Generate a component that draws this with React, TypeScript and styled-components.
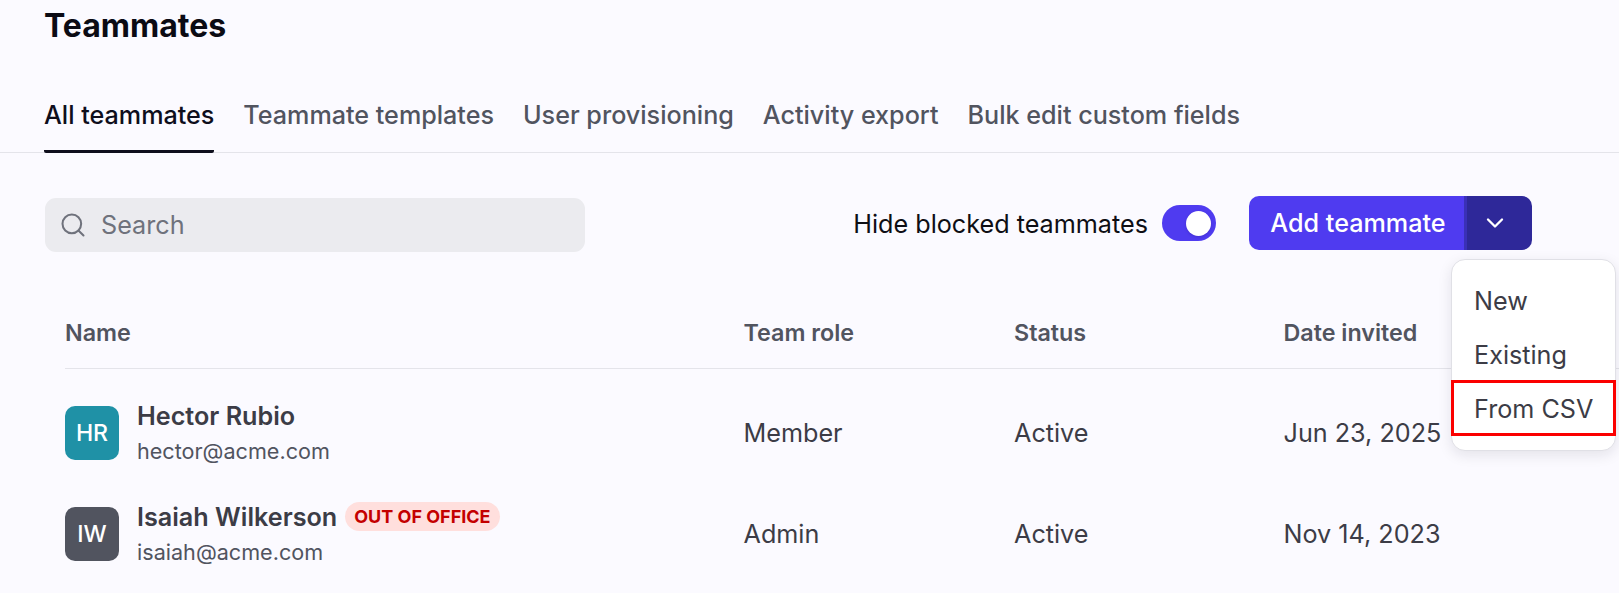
import React from "react";
import styled, { createGlobalStyle } from "styled-components";
import { Search, ChevronDown } from "lucide-react";

const Global = createGlobalStyle`
  html, body { margin: 0; padding: 0; background: #fbfaff; height: 593px; overflow: hidden; }
  * { box-sizing: border-box; }
  body { font-family: Inter, "Liberation Sans", sans-serif; }
`;
const Page = styled.div`
  width: 1619px;
  height: 593px;
  overflow: hidden;
  background: #fbfaff;
`;
const Title = styled.h1`
  margin: 0;
  padding: 7px 0 0 44px;
  height: 90px;
  font-size: 32px;
  line-height: 38px;
  font-weight: 700;
  color: #0b0b14;
`;
const Tabs = styled.nav`
  display: flex;
  gap: 29px;
  height: 63px;
  padding-left: 44px;
  border-bottom: 1px solid #e4e4ea;
`;
const Tab = styled.div<{ $active?: boolean }>`
  height: 63px;
  padding-top: 7px;
  font-size: 25.15px;
  line-height: 36px;
  font-weight: 500;
  color: ${(p) => (p.$active ? "#0e0e1c" : "#51545f")};
  border-bottom: 3px solid ${(p) => (p.$active ? "#0e0e1c" : "transparent")};
  border-radius: 0 0 2px 2px;
`;
const Toolbar = styled.div`
  display: flex;
  align-items: center;
  justify-content: space-between;
  height: 54px;
  margin-top: 43px;
  padding: 0 87px 0 45px;
`;
const SearchBox = styled.div`
  display: flex;
  align-items: center;
  gap: 14px;
  width: 540px;
  height: 54px;
  margin-top: 4px;
  padding-left: 14px;
  border-radius: 11px;
  background: #ebebef;
  color: #6f727c;
  font-size: 25.2px;
`;
const Controls = styled.div`
  display: flex;
  align-items: center;
`;
const ToggleLabel = styled.span`
  font-size: 25.2px;
  color: #0e0e14;
  margin-right: 14px;
  padding-top: 2px;
`;
const Toggle = styled.span`
  display: flex;
  align-items: center;
  justify-content: flex-end;
  width: 54px;
  height: 36px;
  padding-right: 5px;
  border-radius: 18px;
  background: #4f3bf0;
  margin-right: 33px;
`;
const Knob = styled.span`
  width: 25px;
  height: 25px;
  border-radius: 50%;
  background: #fff;
  box-shadow: 0 1px 3px rgba(20, 10, 90, 0.2);
`;
const SplitButton = styled.div`
  position: relative;
  display: flex;
  height: 54px;
`;
const MainButton = styled.div`
  display: flex;
  align-items: center;
  justify-content: center;
  width: 215px;
  padding-left: 3px;
  border-radius: 10px 0 0 10px;
  background: #4f3bf0;
  color: #fff;
  font-size: 25.2px;
  font-weight: 500;
`;
const CaretButton = styled.div`
  display: flex;
  align-items: center;
  justify-content: center;
  width: 68px;
  padding-right: 9px;
  border-radius: 0 10px 10px 0;
  background: #2e2899;
  border-left: 3px solid #3a30b8;
  color: #fff;
`;
const Menu = styled.div`
  position: absolute;
  z-index: 2;
  top: 63px;
  right: -84px;
  width: 165px;
  height: 192px;
  padding-top: 13px;
  background: #fff;
  border: 1px solid #e0e0e6;
  border-radius: 14px;
  box-shadow: 0 4px 14px rgba(20, 20, 40, 0.1);
`;
const MenuItem = styled.div<{ $marked?: boolean }>`
  display: flex;
  align-items: center;
  height: ${(p) => (p.$marked ? "56px" : "54px")};
  padding-left: ${(p) => (p.$marked ? "23px" : "22px")};
  padding-top: 2px;
  margin: ${(p) => (p.$marked ? "-1px -1px 0" : "0")};
  font-size: 25.2px;
  color: #3c3c46;
  outline: ${(p) => (p.$marked ? "3px solid #fb0000" : "none")};
  outline-offset: -3px;
`;
const Table = styled.div`
  margin-top: 49px;
  padding: 0 0 0 65px;
`;
const Grid = styled.div`
  display: grid;
  grid-template-columns: 678.5px 270.5px 269.5px 1fr;
  align-items: center;
`;
const HeaderRow = styled(Grid)`
  height: 72px;
  margin-top: -2px;
  border-bottom: 1px solid #e4e4ea;
  font-size: 23.3px;
  font-weight: 600;
  color: #51545f;
`;
const Row = styled(Grid)`
  height: 101px;
  font-size: 25.2px;
  color: #3c3c46;
`;
const Rows = styled.div`
  padding-top: 13px;
`;
const Person = styled.div`
  display: flex;
  align-items: center;
  gap: 18px;
`;
const Avatar = styled.div<{ $bg: string }>`
  display: flex;
  align-items: center;
  justify-content: center;
  width: 54px;
  height: 54px;
  border-radius: 10px;
  background: ${(p) => p.$bg};
  color: #fff;
  font-size: 23.1px;
  font-weight: 500;
`;
const PersonText = styled.div`
  margin-top: -2px;
`;
const NameLine = styled.div`
  display: flex;
  align-items: center;
  gap: 8px;
  height: 38px;
  font-size: 25.2px;
  font-weight: 600;
  color: #3c3c46;
`;
const Email = styled.div`
  font-size: 21.6px;
  line-height: 32px;
  color: #51545f;
`;
const Badge = styled.span`
  display: inline-flex;
  align-items: center;
  height: 29px;
  padding: 0 9px;
  border-radius: 15px;
  background: #ffdfdd;
  color: #c40000;
  font-size: 18px;
  font-weight: 700;
`;

const people = [
  { i: "HR", bg: "#1f91a6", n: "Hector Rubio", e: "hector@acme.com", r: "Member", d: "Jun 23, 2025" },
  { i: "IW", bg: "#51545f", n: "Isaiah Wilkerson", e: "isaiah@acme.com", r: "Admin", d: "Nov 14, 2023", b: "OUT OF OFFICE" },
];

export default function App() {
  return (
    <Page>
      <Global />
      <Title>Teammates</Title>
      <Tabs>
        <Tab $active>All teammates</Tab>
        <Tab>Teammate templates</Tab>
        <Tab>User provisioning</Tab>
        <Tab>Activity export</Tab>
        <Tab>Bulk edit custom fields</Tab>
      </Tabs>
      <Toolbar>
        <SearchBox>
          <Search size={28} strokeWidth={1.75} />
          Search
        </SearchBox>
        <Controls>
          <ToggleLabel>Hide blocked teammates</ToggleLabel>
          <Toggle><Knob /></Toggle>
          <SplitButton>
            <MainButton>Add teammate</MainButton>
            <CaretButton><ChevronDown size={28} strokeWidth={2} /></CaretButton>
            <Menu>
              <MenuItem>New</MenuItem>
              <MenuItem>Existing</MenuItem>
              <MenuItem $marked>From CSV</MenuItem>
            </Menu>
          </SplitButton>
        </Controls>
      </Toolbar>
      <Table>
        <HeaderRow>
          <div>Name</div>
          <div>Team role</div>
          <div>Status</div>
          <div>Date invited</div>
        </HeaderRow>
        <Rows>
          {people.map((p) => (
            <Row key={p.i}>
              <Person>
                <Avatar $bg={p.bg}>{p.i}</Avatar>
                <PersonText>
                  <NameLine>
                    {p.n}
                    {p.b && <Badge>{p.b}</Badge>}
                  </NameLine>
                  <Email>{p.e}</Email>
                </PersonText>
              </Person>
              <div>{p.r}</div>
              <div>Active</div>
              <div>{p.d}</div>
            </Row>
          ))}
        </Rows>
      </Table>
    </Page>
  );
}
